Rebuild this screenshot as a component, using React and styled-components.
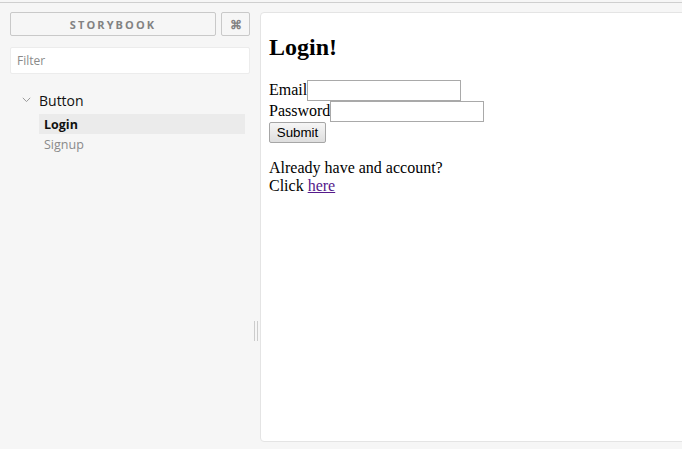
import React from "react";
import styled, { createGlobalStyle } from "styled-components";

const Global = createGlobalStyle`
  html, body { margin: 0; padding: 0; background: #f6f6f6; overflow: hidden; }
  #root { height: 449px; }
`;

const Shell = styled.div`
  height: 449px;
  padding-top: 2px;
  box-sizing: border-box;
  overflow: hidden;
  background: #f6f6f6;
`;

const Main = styled.div`
  display: flex;
  height: 447px;
  box-sizing: border-box;
  border-top: 1px solid #cfcfcf;
  padding: 9px 0 7px 10px;
  font-family: "Open Sans", "Noto Sans", sans-serif;
`;

const Sidebar = styled.aside`
  width: 240px;
  flex: none;
  display: flex;
  flex-direction: column;
`;

const Header = styled.div`
  display: flex;
  gap: 5px;
  height: 24px;
`;

const HeadButton = styled.button`
  flex: ${(p) => (p.$wide ? 1 : "none")};
  width: ${(p) => (p.$wide ? "auto" : "29px")};
  height: 24px;
  box-sizing: border-box;
  border: 1px solid #c9c9c9;
  border-radius: 2px;
  background: #f6f6f6;
  color: #828282;
  font-family: "Open Sans", "Noto Sans", sans-serif;
  font-weight: 700;
  font-size: ${(p) => (p.$wide ? "11px" : "12px")};
  letter-spacing: ${(p) => (p.$wide ? "2.1px" : "0")};
  padding: 0;
  display: flex;
  align-items: center;
  justify-content: center;
`;

const Filter = styled.input`
  margin-top: 11px;
  height: 27px;
  box-sizing: border-box;
  border: 1px solid #ececec;
  border-radius: 2px;
  background: #fff;
  padding: 0 6px;
  font-family: "Open Sans", "Noto Sans", sans-serif;
  font-size: 12px;
  color: #333;
  outline: none;
  &::placeholder { color: #8a8a8a; }
`;

const Tree = styled.div`
  margin-top: 16px;
  display: flex;
  flex-direction: column;
`;

const Kind = styled.div`
  display: flex;
  align-items: center;
  height: 20px;
  padding-left: 12px;
  gap: 8px;
  font-size: 14px;
  color: #111;
  margin-bottom: 4px;
`;

const Stories = styled.div`
  margin-left: 29px;
  margin-right: 5px;
  display: flex;
  flex-direction: column;
`;

const Story = styled.div`
  height: 20px;
  display: flex;
  align-items: center;
  padding-left: 5px;
  font-size: 12.5px;
  font-weight: ${(p) => (p.$active ? 700 : 400)};
  color: ${(p) => (p.$active ? "#111" : "#8a8a8a")};
  background: ${(p) => (p.$active ? "#ebebeb" : "transparent")};
`;

const HandleCol = styled.div`
  width: 10px;
  flex: none;
  display: flex;
  justify-content: center;
  padding-top: 309px;
  box-sizing: border-box;
`;

const Grip = styled.div`
  width: 2px;
  height: 20px;
  border-left: 1px solid #cccccc;
  border-right: 1px solid #cccccc;
  margin-left: 2px;
`;

const Preview = styled.main`
  flex: none;
  width: 440px;
  box-sizing: border-box;
  background: #fff;
  border: 1px solid #e4e4e4;
  border-radius: 4px;
  padding: 0 8px;
  font-family: "Liberation Serif", "Times New Roman", serif;
  font-size: 16px;
  color: #000;
`;

const Title = styled.h2`
  font-size: 24px;
  font-weight: 700;
  margin: 20px 0 19px;
  line-height: 28px;
`;

const Row = styled.div`
  display: flex;
  align-items: baseline;
  height: 21px;
`;

const Field = styled.input`
  width: 154px;
  height: 21px;
  box-sizing: border-box;
  border: 1px solid #a9a9a9;
  padding: 1px 2px;
  font-family: "Liberation Sans", Arial, sans-serif;
  font-size: 13.33px;
  background: #fff;
  outline: none;
`;

const Submit = styled.button`
  width: 57px;
  height: 21px;
  box-sizing: border-box;
  border: 1px solid #a6a6a6;
  border-radius: 2px;
  background: linear-gradient(#f6f6f6, #dedede);
  font-family: "Liberation Sans", Arial, sans-serif;
  font-size: 13.33px;
  color: #000;
  padding: 0;
`;

const Para = styled.p`
  margin: 16px 0;
  line-height: 18px;
`;

const Link = styled.a`
  color: #551a8b;
  text-decoration: underline;
`;

function Chevron() {
  return (
    <svg width="9" height="6" viewBox="0 0 9 6" fill="none">
      <path d="M0.8 0.8 L4.5 4.6 L8.2 0.8" stroke="#9a9a9a" strokeWidth="1" />
    </svg>
  );
}

export default function App() {
  return (
    <>
      <Global />
      <Shell>
        <Main>
          <Sidebar>
            <Header>
              <HeadButton $wide>STORYBOOK</HeadButton>
              <HeadButton>⌘</HeadButton>
            </Header>
            <Filter placeholder="Filter" />
            <Tree>
              <Kind>
                <Chevron />
                <span>Button</span>
              </Kind>
              <Stories>
                <Story $active>Login</Story>
                <Story>Signup</Story>
              </Stories>
            </Tree>
          </Sidebar>
          <HandleCol>
            <Grip />
          </HandleCol>
          <Preview>
            <Title>Login!</Title>
            <form onSubmit={(e) => e.preventDefault()}>
              <Row>
                <span>Email</span>
                <Field type="text" />
              </Row>
              <Row>
                <span>Password</span>
                <Field type="password" />
              </Row>
              <Row>
                <Submit type="submit">Submit</Submit>
              </Row>
            </form>
            <Para>
              Already have and account?
              <br />
              Click <Link href="#">here</Link>
            </Para>
          </Preview>
        </Main>
      </Shell>
    </>
  );
}
